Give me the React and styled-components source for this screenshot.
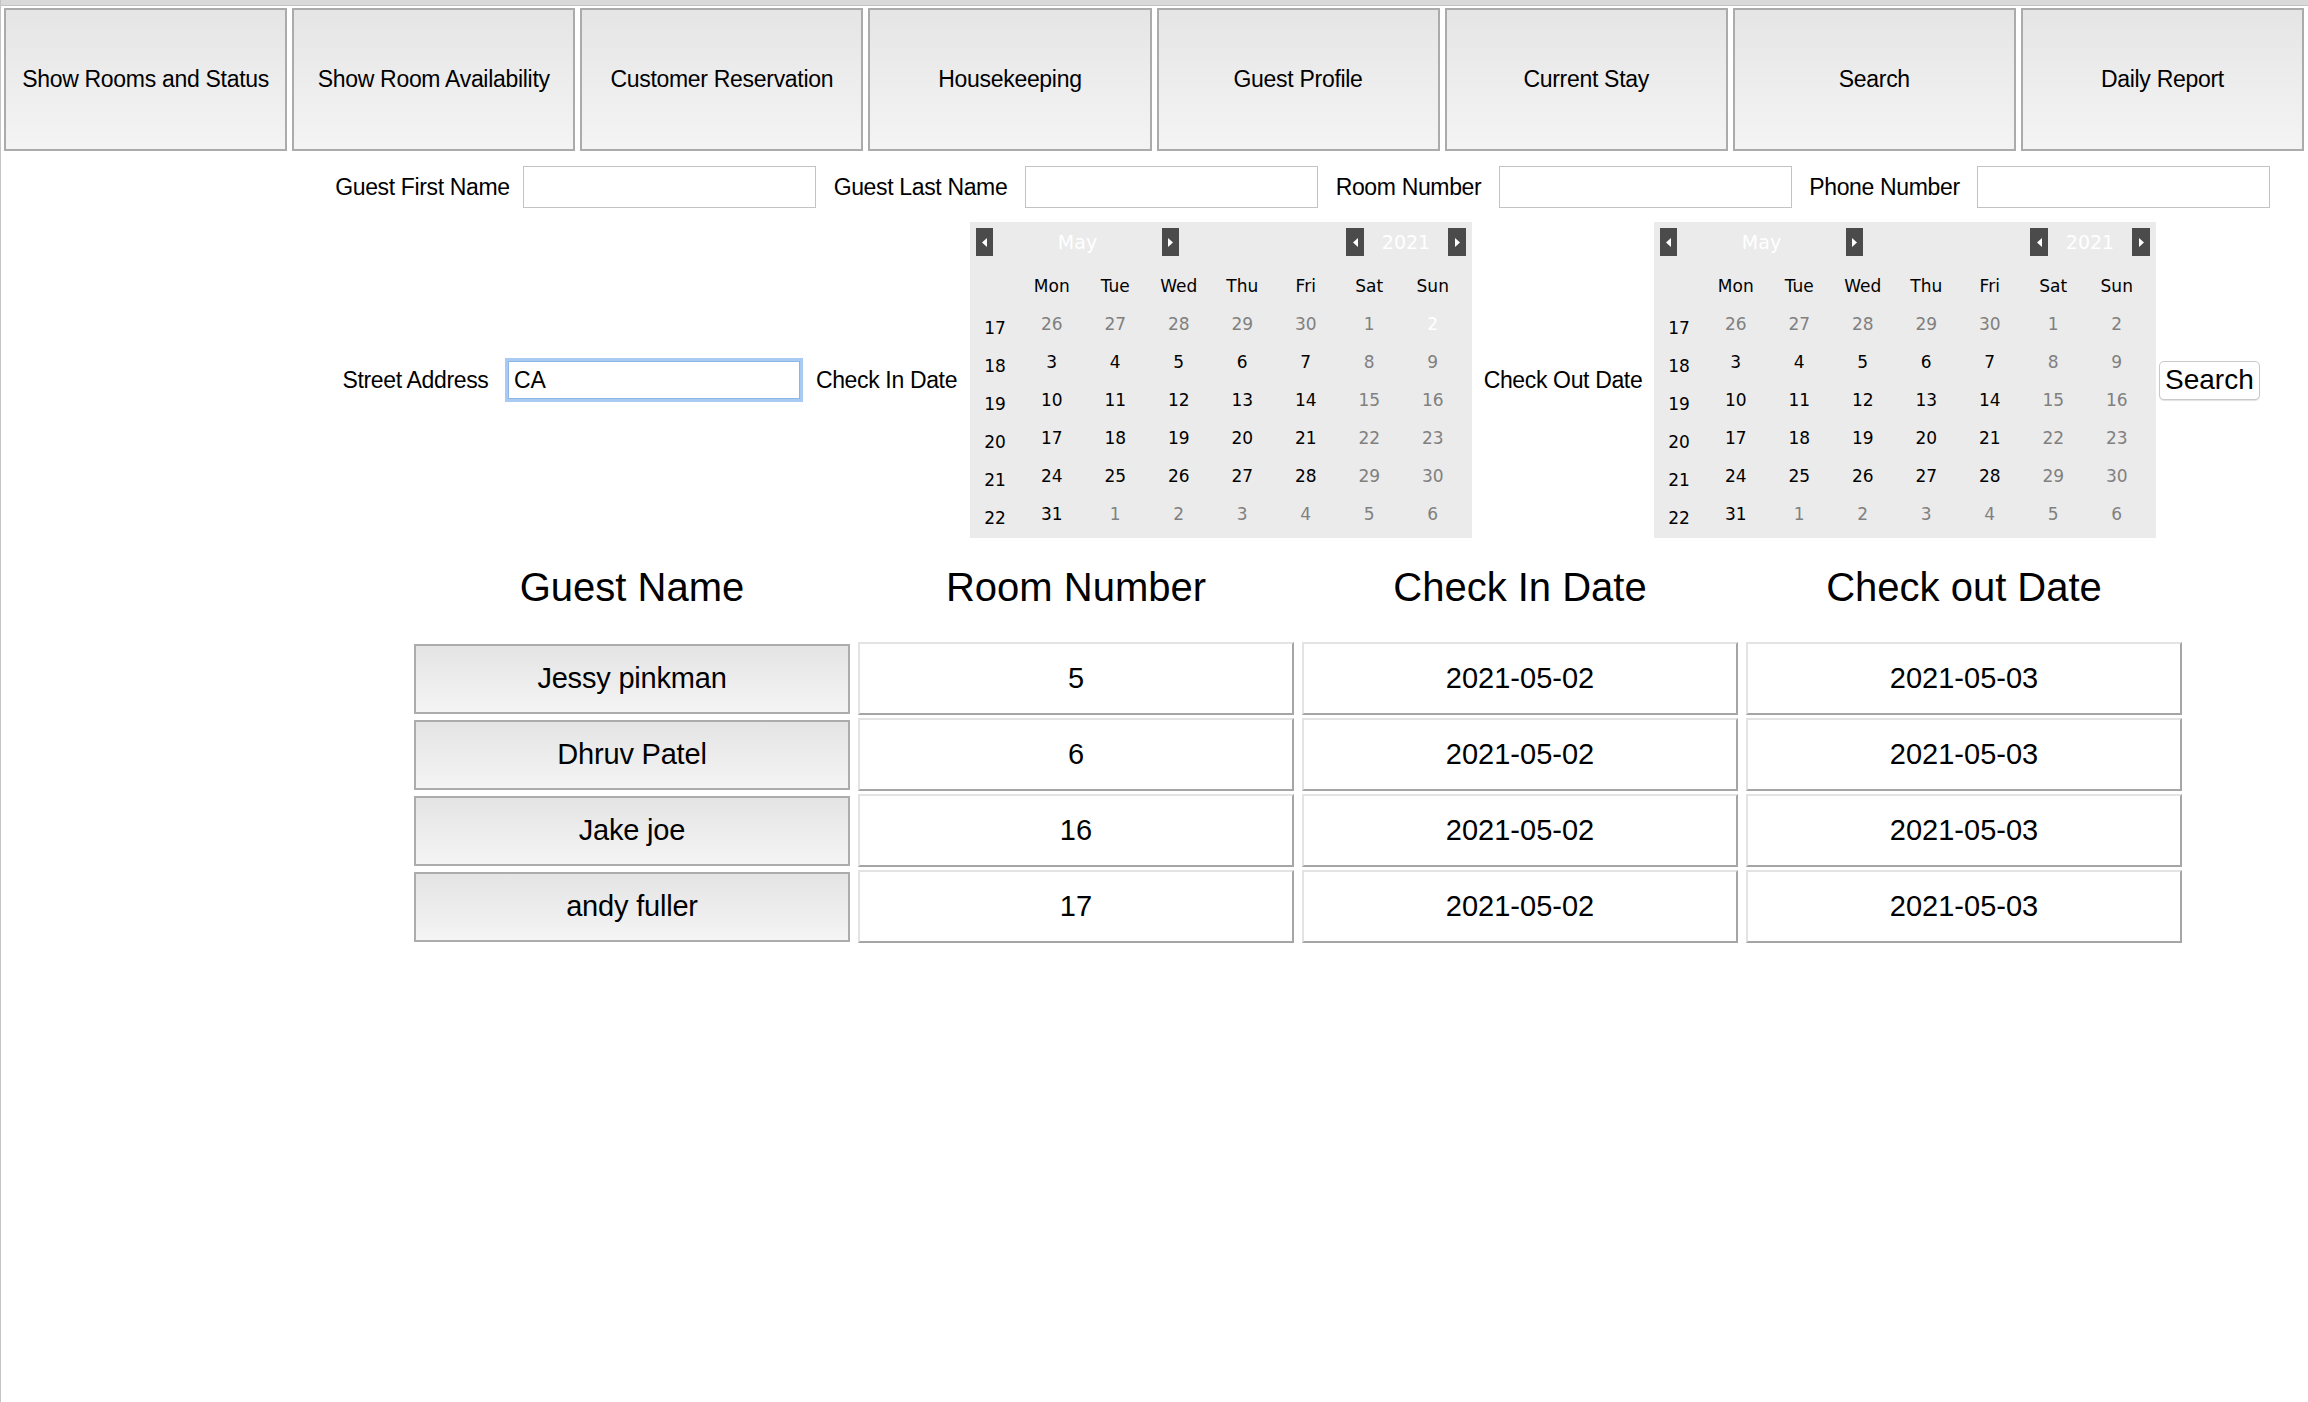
import React from "react";
import styled, { createGlobalStyle } from "styled-components";

const GlobalStyle = createGlobalStyle`
  html, body { margin: 0; padding: 0; background: #fff; height: 100%; overflow: hidden; }
  body { font-family: "Liberation Sans", Arial, sans-serif; color: #000; }
  *, *::before, *::after { box-sizing: border-box; }
`;

const Window = styled.div`
  height: 100vh;
  border-left: 1px solid #c4c4c4;
  background: #fff;
  overflow: hidden;
`;

const TitleStrip = styled.div`
  height: 6px;
  background: #d9d9d9;
  border-bottom: 1px solid #c2c2c2;
`;

const Toolbar = styled.nav`
  display: grid;
  grid-template-columns: repeat(8, 1fr);
  gap: 5px;
  padding: 2px 4px 0 3px;
`;

const NavButton = styled.button`
  height: 143px;
  border: 2px solid #ababab;
  background: linear-gradient(#e5e5e5, #f4f4f4);
  font-family: "Liberation Sans", Arial, sans-serif;
  font-size: 23px;
  letter-spacing: -0.3px;
  color: #000;
  padding: 0;
  white-space: nowrap;
`;

const FieldRow = styled.div`
  display: flex;
  align-items: center;
  margin-top: ${(p) => p.$top}px;
  padding-left: ${(p) => p.$left}px;
`;

const FieldLabel = styled.label`
  flex: 0 0 ${(p) => p.$w}px;
  text-align: center;
  font-size: 23px;
  letter-spacing: -0.35px;
  white-space: nowrap;
`;

const TextInput = styled.input`
  flex: 0 0 ${(p) => p.$w}px;
  width: ${(p) => p.$w}px;
  height: ${(p) => p.$h}px;
  border: ${(p) => (p.$focus ? "3px solid #a8cbf3" : "1px solid #c3c3c3")};
  box-shadow: ${(p) => (p.$focus ? "inset 0 0 0 1px #8db5e6" : "none")};
  background: #fff;
  font-family: "Liberation Sans", Arial, sans-serif;
  font-size: 23px;
  color: #000;
  padding: 0 6px;
  outline: none;
  margin: 0;
`;

const Calendar = styled.div`
  flex: 0 0 502px;
  width: 502px;
  height: 316px;
  background: #ebebeb;
  padding: 0 8px 5px 0;
  font-family: "DejaVu Sans", Verdana, sans-serif;
`;

const CalNav = styled.div`
  height: 40px;
  display: flex;
  align-items: center;
  padding: 0 0 0 6px;
  margin-right: -2px;
`;

const ArrowBtn = styled.span`
  flex: 0 0 ${(p) => p.$w}px;
  height: 28px;
  background: #4b4b4b;
  display: flex;
  align-items: center;
  justify-content: center;
`;

const NavText = styled.span`
  flex: 0 0 ${(p) => p.$w}px;
  text-align: center;
  color: #fff;
  font-size: 19px;
`;

const Spacer = styled.span`
  flex: 1;
`;

const CalGrid = styled.div`
  margin-top: 5px;
  display: grid;
  grid-template-columns: 50px repeat(7, 63.5px);
  grid-auto-rows: 38px;
  font-size: 17px;
`;

const CalCell = styled.span`
  display: flex;
  align-items: center;
  justify-content: center;
  padding-top: ${(p) => (p.$week ? 7 : 0)}px;
  color: ${(p) =>
    p.$tone === "muted" ? "#808080" : p.$tone === "selected" ? "#ffffff" : "#000"};
`;

const SearchButton = styled.button`
  margin-left: 3px;
  height: 39px;
  padding: 0 5px;
  background: #fff;
  border: 1px solid #c9c9c9;
  border-radius: 5px;
  box-shadow: 0 1px 1px rgba(0, 0, 0, 0.12);
  font-family: "Liberation Sans", Arial, sans-serif;
  font-size: 28px;
  color: #000;
`;

const Table = styled.section`
  margin: 19px 0 0 413px;
`;

const HeaderRow = styled.div`
  display: grid;
  grid-template-columns: repeat(4, 436px);
  column-gap: 8px;
  height: 60px;
  align-items: center;
  margin-bottom: 25px;
`;

const HeadCell = styled.div`
  text-align: center;
  font-size: 40px;
  white-space: nowrap;
`;

const BodyGrid = styled.div`
  display: grid;
  grid-template-columns: repeat(4, 436px);
  column-gap: 8px;
  row-gap: 3px;
  grid-auto-rows: 73px;
`;

const NameCell = styled.div`
  align-self: center;
  height: 70px;
  border: 2px solid #acacac;
  background: linear-gradient(#e4e4e4, #f4f4f4);
  display: flex;
  align-items: center;
  justify-content: center;
  font-size: 29px;
  letter-spacing: -0.2px;
`;

const ValueCell = styled.div`
  border-top: 2px solid #e3e3e3;
  border-left: 2px solid #e3e3e3;
  border-right: 2px solid #a5a5a5;
  border-bottom: 2px solid #a5a5a5;
  background: #fff;
  display: flex;
  align-items: center;
  justify-content: center;
  font-size: 29px;
`;

const Tri = ({ dir }) => (
  <svg width="5" height="9" viewBox="0 0 5 9">
    <polygon points={dir === "left" ? "5,0 5,9 0,4.5" : "0,0 0,9 5,4.5"} fill="#fff" />
  </svg>
);

const weeks = [
  [17, [26, 27, 28, 29, 30, 1, 2]],
  [18, [3, 4, 5, 6, 7, 8, 9]],
  [19, [10, 11, 12, 13, 14, 15, 16]],
  [20, [17, 18, 19, 20, 21, 22, 23]],
  [21, [24, 25, 26, 27, 28, 29, 30]],
  [22, [31, 1, 2, 3, 4, 5, 6]],
];
const dayNames = ["Mon", "Tue", "Wed", "Thu", "Fri", "Sat", "Sun"];

function toneFor(wi, di, day, selected) {
  const other = (wi === 0 && day > 20) || (wi === 5 && day < 10);
  if (!other && selected === day) return "selected";
  if (other || di >= 5) return "muted";
  return "dark";
}

function MonthCalendar({ selected }) {
  return (
    <Calendar>
      <CalNav>
        <ArrowBtn $w={17}><Tri dir="left" /></ArrowBtn>
        <NavText $w={169}>May</NavText>
        <ArrowBtn $w={17}><Tri dir="right" /></ArrowBtn>
        <Spacer />
        <ArrowBtn $w={18}><Tri dir="left" /></ArrowBtn>
        <NavText $w={84}>2021</NavText>
        <ArrowBtn $w={18}><Tri dir="right" /></ArrowBtn>
      </CalNav>
      <CalGrid>
        <CalCell />
        {dayNames.map((d) => (
          <CalCell key={d}>{d}</CalCell>
        ))}
        {weeks.map(([wk, days], wi) => (
          <React.Fragment key={wk}>
            <CalCell $week>{wk}</CalCell>
            {days.map((day, di) => (
              <CalCell key={di} $tone={toneFor(wi, di, day, selected)}>
                {day}
              </CalCell>
            ))}
          </React.Fragment>
        ))}
      </CalGrid>
    </Calendar>
  );
}

const tabs = [
  "Show Rooms and Status",
  "Show Room Availability",
  "Customer Reservation",
  "Housekeeping",
  "Guest Profile",
  "Current Stay",
  "Search",
  "Daily Report",
];

const rows = [
  ["Jessy pinkman", "5"],
  ["Dhruv Patel", "6"],
  ["Jake joe", "16"],
  ["andy fuller", "17"],
];

export default function App() {
  return (
    <>
      <GlobalStyle />
      <Window>
        <TitleStrip />
        <Toolbar>
          {tabs.map((t) => (
            <NavButton key={t}>{t}</NavButton>
          ))}
        </Toolbar>

        <FieldRow $top={15} $left={321}>
          <FieldLabel $w={201}>Guest First Name</FieldLabel>
          <TextInput $w={293} $h={42} />
          <FieldLabel $w={209}>Guest Last Name</FieldLabel>
          <TextInput $w={293} $h={42} />
          <FieldLabel $w={181}>Room Number</FieldLabel>
          <TextInput $w={293} $h={42} />
          <FieldLabel $w={185}>Phone Number</FieldLabel>
          <TextInput $w={293} $h={42} />
        </FieldRow>

        <FieldRow $top={14} $left={325}>
          <FieldLabel $w={179}>Street Address</FieldLabel>
          <TextInput $w={298} $h={44} $focus defaultValue="CA" />
          <FieldLabel $w={167}>Check In Date</FieldLabel>
          <MonthCalendar selected={2} />
          <FieldLabel $w={182}>Check Out Date</FieldLabel>
          <MonthCalendar selected={null} />
          <SearchButton>Search</SearchButton>
        </FieldRow>

        <Table>
          <HeaderRow>
            <HeadCell>Guest Name</HeadCell>
            <HeadCell>Room Number</HeadCell>
            <HeadCell>Check In Date</HeadCell>
            <HeadCell>Check out Date</HeadCell>
          </HeaderRow>
          <BodyGrid>
            {rows.map(([name, room]) => (
              <React.Fragment key={name}>
                <NameCell>{name}</NameCell>
                <ValueCell>{room}</ValueCell>
                <ValueCell>2021-05-02</ValueCell>
                <ValueCell>2021-05-03</ValueCell>
              </React.Fragment>
            ))}
          </BodyGrid>
        </Table>
      </Window>
    </>
  );
}
